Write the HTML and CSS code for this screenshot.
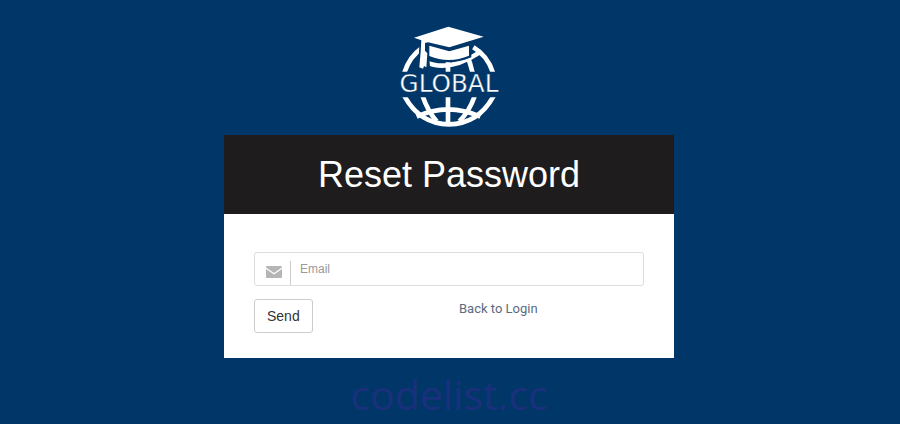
FILE: index.html
```html
<!DOCTYPE html>
<html lang="en">
<head>
<meta charset="utf-8">
<title>Reset Password</title>
<link rel="stylesheet" href="styles.css">
</head>
<body>
<main class="page">
  <svg class="logo" viewBox="27 21 300 300" role="img" aria-label="Global">
    <defs>
      <clipPath id="top-half"><path d="M20 20H330V155H20Z"/></clipPath>
      <clipPath id="bottom-half"><path d="M20 232H335V325H20Z"/></clipPath>
    </defs>
    <g class="globe" clip-path="url(#top-half)">
      <path d="M42 162Q56 112 96 84M250 82Q294 108 310 162"/>
      <path d="M174 120V160M106 126Q176 158 268 98M226 96Q242 128 248 160"/>
    </g>
    <g class="globe" clip-path="url(#bottom-half)">
      <path d="M40 222Q86 312 177 313Q268 312 314 222"/>
      <path d="M174 225V313M97 225Q112 272 140 304M255 225Q240 272 208 304M80 290Q174 246 271 290"/>
    </g>
    <g class="cap">
      <path class="cap-edge" d="M90 60L175 40L265 56L237 66V107Q178 132 118 108V78L108 80L113 141L91 141L96 64Z"/>
      <path d="M72 53L175 20L281 50L178 82L114 67L105 69V92L112 100L109 142L102 138L99 146L88 142L92 96L94 61Z"/>
      <path d="M118 77L178 94L237 77V107Q178 132 118 108Z"/>
    </g>
    <text class="logo-text" x="177" y="217" text-anchor="middle">GLOBAL</text>
  </svg>
  <section class="card">
    <header class="card-header"><h1>Reset Password</h1></header>
    <form class="card-body">
      <div class="field">
        <label class="field-icon" for="email" aria-label="Email">
          <svg viewBox="0 0 16 12" aria-hidden="true"><path d="M1 0H15Q16 0 16 1.500L8 7L0 1.500Q0 0 1 0ZM0 3L8 8.500L16 3V11Q16 12 15 12H1Q0 12 0 11Z"/></svg>
        </label>
        <input id="email" type="email" placeholder="Email">
      </div>
      <div class="actions">
        <button type="submit">Send</button>
        <a href="#">Back to Login</a>
      </div>
    </form>
  </section>
  <p class="watermark">codelist.cc</p>
</main>
</body>
</html>
```
FILE: styles.css
```css
* { box-sizing: border-box; }
body {
  margin: 0;
  background: #003768;
  font-family: "Liberation Sans", Arial, sans-serif;
  font-size: 14px;
}
.page {
  display: flex;
  flex-direction: column;
  align-items: center;
  padding: 27px 2px 0 0;
}
.logo { width: 100px; height: 100px; margin-bottom: 8px; overflow: visible; }
.globe { fill: none; stroke: #fff; stroke-width: 14; }
.cap { fill: #fff; }
.cap-edge { fill: #003768; stroke: #003768; stroke-width: 14; }
.logo-text { fill: #fff; font-family: "DejaVu Sans", sans-serif; font-size: 74px; stroke: #003768; stroke-width: 1px; }
.card { width: 100%; max-width: 450px; background: #fff; }
.card-header { padding: 20px; background: #1e1c1d; color: #fff; text-align: center; }
h1 { margin: 0; font-size: 36px; font-weight: 400; line-height: 39px; }
.card-body { padding: 38px 30px 25px; }
.field {
  display: flex;
  height: 34px;
  border: 1px solid #ddd;
  border-radius: 3px;
}
.field-icon {
  width: 36px;
  margin-top: 8px;
  padding: 5px 0 0 11px;
  border-right: 1px solid #ccc;
}
.field-icon svg { display: block; width: 16px; height: 12px; fill: #b5b5b5; }
input {
  flex: 1;
  min-width: 0;
  padding: 0 9px;
  border: 0;
  background: transparent;
  font: 12px "Liberation Sans", Arial, sans-serif;
}
input::placeholder { color: #999; }
.actions { display: grid; grid-template-columns: 1fr 1fr; padding-top: 13px; }
button {
  justify-self: start;
  height: 34px;
  padding: 0 12px;
  border: 1px solid #ccc;
  border-radius: 3px;
  background: #fff;
  color: #333;
  font: 14px "Liberation Sans", Arial, sans-serif;
}
a {
  padding-left: 10px;
  color: #5a6b7e;
  font: 13px/20px Roboto, sans-serif;
  text-decoration: none;
}
.watermark {
  margin: 8px 0 0;
  color: #1b307c;
  font: 41px/56px "Open Sans", sans-serif;
}
```
